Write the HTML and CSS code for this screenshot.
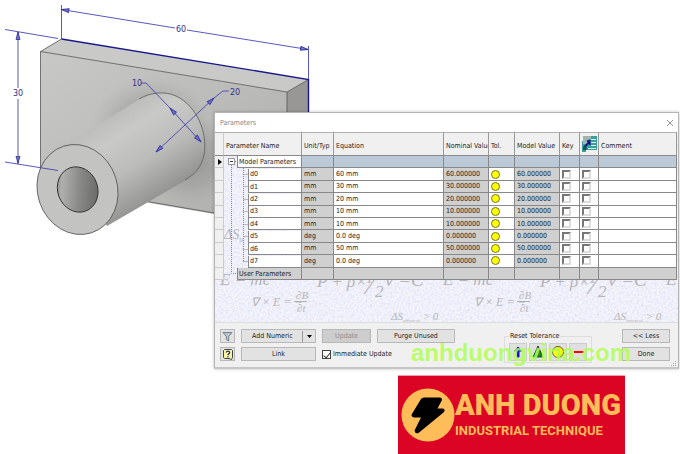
FILE: index.html
```html
<!DOCTYPE html>
<html lang="en">
<head>
<meta charset="utf-8">
<title>Parameters</title>
<link rel="stylesheet" href="styles.css">
</head>
<body>
<main class="canvas">
<svg class="model" width="330" height="250" viewBox="0 0 330 250" role="img" aria-label="Plate with hollow boss and dimensions">
  <defs>
    <linearGradient id="face" x1="0" y1="0" x2="1" y2="1"><stop offset="0" stop-color="#c8c8c6"/><stop offset=".5" stop-color="#bbbbb9"/><stop offset="1" stop-color="#acacaa"/></linearGradient>
    <linearGradient id="body" gradientUnits="userSpaceOnUse" x1="97" y1="122" x2="148" y2="204"><stop offset="0" stop-color="#bcbcba"/><stop offset=".25" stop-color="#c9c9c7"/><stop offset=".6" stop-color="#bbbbb9"/><stop offset="1" stop-color="#939391"/></linearGradient>
    <linearGradient id="bore" x1="0" y1=".1" x2="1" y2=".6"><stop offset="0" stop-color="#6c6c6a"/><stop offset=".2" stop-color="#b0b0ae"/><stop offset=".6" stop-color="#898987"/><stop offset="1" stop-color="#6c6c6a"/></linearGradient>
    <radialGradient id="shade"><stop offset="0" stop-color="#777" stop-opacity=".55"/><stop offset=".55" stop-color="#888" stop-opacity=".35"/><stop offset="1" stop-color="#999" stop-opacity="0"/></radialGradient>
    <clipPath id="plate"><path d="M40.500 51.500L287 92V230L40.500 188Z"/></clipPath>
    <marker id="tip" markerUnits="userSpaceOnUse" markerWidth="10" markerHeight="6" refX="8" refY="3" orient="auto-start-reverse"><path d="M.5 1L8 3L.5 5Z" fill="#7171bd" stroke="#2929a0" stroke-width=".8"/></marker>
  </defs>
  <path d="M40.500 51.500L287 92V230L40.500 188Z" fill="url(#face)"/>
  <g clip-path="url(#plate)"><ellipse cx="152" cy="128" rx="60" ry="52" fill="url(#shade)"/><ellipse cx="190" cy="160" rx="50" ry="45" fill="url(#shade)"/></g>
  <path d="M61.500 39L308.500 79.500L287 92L40.500 51.500Z" fill="#c9c9c7"/>
  <path d="M287 92L308.500 79.500V140H287Z" fill="#999795"/>
  <path d="M61.500 39L40.500 51.500V188M40.500 51.500L287 92L308.500 79.500M287 92V120M147 201.500L220 214" fill="none" stroke="#555" stroke-width=".8"/>
  <path d="M147 202.500L220 215V228L90 232Z" fill="#fff"/>
  <path d="M57 150L140 99C151 92 165 91 176 96C197 106 208 133 204 155C201 168 195 174 186 180L107 226Z" fill="url(#body)"/>
  <path d="M139 99C151 92 165 91 176 96C197 106 208 133 204 155C201 168 195 174 185 180" fill="none" stroke="#666" stroke-width=".9"/>
  <ellipse cx="77.500" cy="189.500" rx="40" ry="45.500" transform="rotate(-18 77.500 189.500)" fill="#c3c3c1" stroke="#555" stroke-width=".8"/>
  <ellipse cx="77.700" cy="189.500" rx="20" ry="23" transform="rotate(-20 77.700 189.500)" fill="url(#bore)" stroke="#333" stroke-width=".9"/>
  <g fill="none" stroke="#4545b4" stroke-width=".9">
    <path d="M61.500 5V39M308.500 46V80M5 29.500L58 38.500M5 162L58 170.500"/>
    <path d="M61.500 9.500L175 28" marker-start="url(#tip)"/><path d="M187 30L308 49.500" marker-end="url(#tip)"/>
    <path d="M18 32V88" marker-start="url(#tip)"/><path d="M18 99V163.500" marker-end="url(#tip)"/>
    <path d="M141 83H146L170 108"/><path d="M170 108L201 142" marker-start="url(#tip)" marker-end="url(#tip)"/>
    <path d="M229 91H223L214 98"/><path d="M214 98L156 152" marker-start="url(#tip)" marker-end="url(#tip)"/>
  </g>
  <path d="M61.500 39L308.500 79.500V115" fill="none" stroke="#17178f" stroke-width="1.400"/>
  <g class="dim"><text x="176" y="32">60</text><text x="13" y="96">30</text><text x="132" y="86">10</text><text x="230" y="95">20</text></g>
</svg>

<section class="dialog" aria-labelledby="dlg-title">
  <header class="titlebar">
    <h1 id="dlg-title">Parameters</h1>
    <button class="close" aria-label="Close"><svg width="8" height="8" viewBox="0 0 8 8"><path d="M1 1L7 7M7 1L1 7" stroke="#888" stroke-width=".9"/></svg></button>
  </header>
  <div class="workarea">
    <svg class="paper" width="100%" height="100%" aria-hidden="true">
      <filter id="grain" x="0" y="0" width="100%" height="100%"><feTurbulence type="fractalNoise" baseFrequency=".45" numOctaves="2" seed="4"/><feColorMatrix values="0 0 0 0 .72  0 0 0 0 .72  0 0 0 0 .95  0 1.800 0 0 -.7"/></filter>
      <rect width="100%" height="100%" fill="#f4f4fb"/>
      <rect width="100%" height="100%" filter="url(#grain)"/>
      <g class="formula">
        <text class="f14" x="9" y="107">ΔS<tspan class="f8" dy="3">u</tspan></text>
        <g id="formulas">
          <text class="f17" x="5" y="153">E = mc</text>
          <text class="f17" x="102" y="155">P + ρ×</text><text class="f14" x="151" y="151">1</text><text class="f26" x="153" y="162">⁄</text><text class="f17" x="160" y="165">2</text><text class="f19" x="170" y="154">v =C</text>
          <text class="f12" x="36" y="174">∇ × E = −</text><text class="f11" x="81" y="167">∂B</text><text class="f11" x="82" y="180">∂t</text><path d="M79 169.500H92"/>
          <text class="f11" x="176" y="188">ΔS<tspan class="f5" dy="2">universe</tspan><tspan dy="-2"> &gt; 0</tspan></text>
        </g>
        <use href="#formulas" x="223"/>
        <text class="f17" x="451" y="153">E</text>
      </g>
      <g class="tree"><path d="M16.500 33V141.500H22M20 29.500H22M28.500 36V129.500M28.500 42.500H33M28.500 54.500H33M28.500 67.500H33M28.500 79.500H33M28.500 92.500H33M28.500 104.500H33M28.500 117.500H33M28.500 129.500H33"/></g>
      <rect x="13.500" y="26.500" width="6" height="6" fill="#fff" stroke="#999"/><path d="M15 29.500H18" stroke="#333"/>
    </svg>
    <table class="params">
      <colgroup><col class="c-sel"><col class="c-name"><col class="c-unit"><col class="c-eq"><col class="c-val"><col class="c-tol"><col class="c-val"><col class="c-key"><col class="c-exp"><col></colgroup>
      <thead><tr><th></th><th>Parameter Name</th><th>Unit/Typ</th><th>Equation</th><th>Nominal Value</th><th>Tol.</th><th>Model Value</th><th>Key</th>
      <th class="exp"><svg width="15" height="16" viewBox="0 0 15 16" role="img" aria-label="Export"><path d="M1 0H15V14H4V16H0V5H1Z" fill="#3c9e9a"/><path d="M1 0H9V3H1Z" fill="#a5b3ae"/><path d="M9 3.500H14M9 6.500H14M9 9.500H14M6 12.500H14" stroke="#d9f2e8" stroke-width="1.200"/><path d="M1 3H6V8H1Z" fill="#9fb8b4"/><path d="M4.500 4.500L8.500 4V9.500L6.500 8L3.500 11.500L2 10L5.500 6.500Z" fill="#101090"/><path d="M1 10.500H4.500V14H1Z" fill="#14514f"/></svg></th><th>Comment</th></tr></thead>
      <tbody>
        <tr class="model-row"><td class="sel"><svg width="4" height="6" viewBox="0 0 4 6"><path d="M0 0L4 3L0 6Z"/></svg></td><td class="tree-cell"><span class="group">Model Parameters</span></td><td></td><td></td><td></td><td></td><td></td><td></td><td></td><td></td></tr>
        <tr><td class="sel"></td><td class="tree-cell"><span class="leaf">d0</span></td><td class="ro">mm</td><td>60 mm</td><td class="ro">60.000000</td><td><i class="dot"></i></td><td class="ro">60.000000</td><td><input type="checkbox" aria-label="d0 key"></td><td><input type="checkbox" aria-label="d0 export"></td><td></td></tr>
        <tr><td class="sel"></td><td class="tree-cell"><span class="leaf">d1</span></td><td class="ro">mm</td><td>30 mm</td><td class="ro">30.000000</td><td><i class="dot"></i></td><td class="ro">30.000000</td><td><input type="checkbox" aria-label="d1 key"></td><td><input type="checkbox" aria-label="d1 export"></td><td></td></tr>
        <tr><td class="sel"></td><td class="tree-cell"><span class="leaf">d2</span></td><td class="ro">mm</td><td>20 mm</td><td class="ro">20.000000</td><td><i class="dot"></i></td><td class="ro">20.000000</td><td><input type="checkbox" aria-label="d2 key"></td><td><input type="checkbox" aria-label="d2 export"></td><td></td></tr>
        <tr><td class="sel"></td><td class="tree-cell"><span class="leaf">d3</span></td><td class="ro">mm</td><td>10 mm</td><td class="ro">10.000000</td><td><i class="dot"></i></td><td class="ro">10.000000</td><td><input type="checkbox" aria-label="d3 key"></td><td><input type="checkbox" aria-label="d3 export"></td><td></td></tr>
        <tr><td class="sel"></td><td class="tree-cell"><span class="leaf">d4</span></td><td class="ro">mm</td><td>10 mm</td><td class="ro">10.000000</td><td><i class="dot"></i></td><td class="ro">10.000000</td><td><input type="checkbox" aria-label="d4 key"></td><td><input type="checkbox" aria-label="d4 export"></td><td></td></tr>
        <tr><td class="sel"></td><td class="tree-cell"><span class="leaf">d5</span></td><td class="ro">deg</td><td>0.0 deg</td><td class="ro">0.000000</td><td><i class="dot"></i></td><td class="ro">0.000000</td><td><input type="checkbox" aria-label="d5 key"></td><td><input type="checkbox" aria-label="d5 export"></td><td></td></tr>
        <tr><td class="sel"></td><td class="tree-cell"><span class="leaf">d6</span></td><td class="ro">mm</td><td>50 mm</td><td class="ro">50.000000</td><td><i class="dot"></i></td><td class="ro">50.000000</td><td><input type="checkbox" aria-label="d6 key"></td><td><input type="checkbox" aria-label="d6 export"></td><td></td></tr>
        <tr><td class="sel"></td><td class="tree-cell"><span class="leaf">d7</span></td><td class="ro">deg</td><td>0.0 deg</td><td class="ro">0.000000</td><td><i class="dot"></i></td><td class="ro">0.000000</td><td><input type="checkbox" aria-label="d7 key"></td><td><input type="checkbox" aria-label="d7 export"></td><td></td></tr>
        <tr class="user-row"><td class="sel"></td><td class="tree-cell"><span class="group">User Parameters</span></td><td></td><td></td><td></td><td></td><td></td><td></td><td></td><td></td></tr>
      </tbody>
    </table>
  </div>
  <footer class="actions">
    <div class="left">
      <button class="btn icon" aria-label="Filter"><svg width="11" height="11" viewBox="0 0 11 11"><path d="M1 1.500H10L6.700 5.500V10L4.300 8.500V5.500Z" fill="#b9c4d0" stroke="#6c7885" stroke-width=".9"/></svg></button>
      <button class="btn add"><span>Add Numeric</span><svg class="caret" width="5" height="3" viewBox="0 0 5 3"><path d="M0 0H5L2.500 3Z"/></svg></button>
      <button class="btn" disabled>Update</button>
      <button class="btn purge">Purge Unused</button>
      <button class="btn icon" aria-label="Help"><svg width="10" height="11" viewBox="0 0 10 11"><path d="M1.500 .5H8.500L9.500 1.500V8.500L8.500 10.500L6 9.500H1.500L.5 8.500V1.500Z" fill="#fbf9a0" stroke="#444"/><path d="M3.300 3.500C3.300 1.600 6.700 1.600 6.700 3.500C6.700 4.700 5 4.600 5 6.200M5 7.300V8.500" fill="none" stroke="#222e78" stroke-width="1.300"/></svg></button>
      <button class="btn">Link</button>
      <label class="check"><input type="checkbox" checked>Immediate Update</label>
    </div>
    <fieldset class="tolerance"><legend>Reset Tolerance</legend>
      <button class="tol" aria-label="Upper"><svg width="16" height="16" viewBox="0 0 16 16"><path d="M8 3L12 7H9V13H7V7H4Z" fill="#1010e0" stroke="#1010e0"/></svg></button>
      <button class="tol" aria-label="Median"><svg width="16" height="16" viewBox="0 0 16 16"><path d="M8 2L13 13H3Z" fill="#128a1c" stroke="#222" stroke-width=".8"/></svg></button>
      <button class="tol" aria-label="Nominal"><svg width="16" height="16" viewBox="0 0 16 16"><circle cx="8" cy="8" r="5.500" fill="#ff0" stroke="#333" stroke-width=".8"/></svg></button>
      <button class="tol" aria-label="Lower"><svg width="16" height="16" viewBox="0 0 16 16"><path d="M4 8H13" stroke="#f00" stroke-width="2"/></svg></button>
    </fieldset>
    <div class="right"><button class="btn">&lt;&lt; Less</button><button class="btn">Done</button></div>
    <svg class="grip" width="6" height="6" viewBox="0 0 6 6" aria-hidden="true"><path d="M4 0H5V1H4ZM2 2H3V3H2ZM4 2H5V3H4ZM0 4H1V5H0ZM2 4H3V5H2ZM4 4H5V5H4Z" fill="#aaa"/></svg>
    <p class="watermark">anhduongvina.com</p>
  </footer>
</section>

<aside class="brand">
  <svg width="54" height="54" viewBox="0 0 54 54" aria-hidden="true"><circle cx="27" cy="27" r="26.500" fill="#ffbd59"/><path d="M23 9.500H39Q42 10 40.500 13L36.500 20.500H42Q45 21.500 42.500 24.500L17.500 45Q14 46 13.500 42.500L20 29.500H13Q9 28.500 11.500 25L20 11Q21 9.500 23 9.500Z"/></svg>
  <div><p class="name">ANH DUONG</p><p class="tag">INDUSTRIAL TECHNIQUE</p></div>
</aside>
</main>
</body>
</html>
```
FILE: styles.css
```css
* { box-sizing: border-box; }
body { margin: 0; background: #fff; color: #222; font: 7px/10px "DejaVu Sans Condensed", "DejaVu Sans", sans-serif; overflow: hidden; }
h1, p { margin: 0; }
button, input { margin: 0; font: inherit; color: inherit; }
svg { display: block; flex: none; }

.canvas { position: relative; padding: 112px 1px 0 214px; }
.model { position: absolute; left: 0; top: 0; }
.dim { fill: #33338f; font: 8px "DejaVu Sans", sans-serif; }

.dialog { position: relative; background: #f0f0f0; border: 1px solid #b4b4b4; border-bottom: 2px solid #c6c6c6; box-shadow: 0 0 3px rgba(0, 0, 0, .25); }
.titlebar { display: flex; align-items: center; justify-content: space-between; height: 19px; padding: 0 4px 0 5px; background: #fff; }
.titlebar h1 { font-size: 7px; font-weight: 400; color: #888; }
.close { padding: 0; border: 0; background: none; }

.workarea { position: relative; padding: 0 1px 42px 0; }
.paper { position: absolute; inset: 0; }
.formula { fill: #b6b6b6; font-family: "Liberation Serif", serif; font-style: italic; }
.formula path { stroke: #b0b0b0; }
.f5 { font-size: 5px; }
.f8 { font-size: 8px; }
.f11 { font-size: 11px; }
.f12 { font-size: 12px; }
.f14 { font-size: 14px; }
.f17 { font-size: 17px; }
.f19 { font-size: 19px; }
.f26 { font-size: 26px; }
.tree { fill: none; stroke: #888; stroke-dasharray: 1 1; }

.params { position: relative; width: 100%; height: 148px; table-layout: fixed; border-spacing: 0; }
.c-sel { width: 9px; }
.c-name { width: 78px; }
.c-unit { width: 32px; }
.c-eq { width: 110px; }
.c-val { width: 45px; }
.c-tol { width: 26px; }
.c-key { width: 20px; }
.c-exp { width: 19px; }
.params th, .params td { padding: 0 2px; border: solid #888; border-width: 0 1px 1px 0; text-align: left; white-space: nowrap; overflow: hidden; font-weight: 400; background: #fff; }
.params th { height: 24px; padding-top: 3px; background: #f0f0f0; border-top: 1px solid #b0b0b0; border-right-color: #999; }
.params th:first-child { border-right-color: #ccc; }
.params th.exp { padding: 0 0 0 2px; }
.params td.sel { padding: 0 0 0 3px; background: #f0f0f0; border-color: #ccc; }
.params .tree-cell { padding: 0 0 0 13px; background: none; border-bottom: 0; vertical-align: bottom; }
.tree-cell span { display: flex; align-items: center; height: 12px; padding-left: 1px; border: solid #888; border-width: 0 0 1px 1px; background: #fff; }
.tree-cell .leaf { margin-left: 11px; }
.params .ro { background: #d0d0d0; }
.params .model-row td:nth-child(n+3) { background: #bccad8; }
.params .user-row td:nth-child(n+3), .user-row .group { background: #d0d0d0; }
.dot { display: block; width: 9px; height: 9px; border: 1px solid #777722; border-radius: 50%; background: #ff0; }
.params input { display: block; appearance: none; width: 9px; height: 9px; border: 2px solid; border-color: #777 #ddd #ddd #777; background: #fff; }

.actions { position: relative; display: flex; gap: 12px; padding: 6px 8px 4px 5px; border-top: 1px solid #ddd; }
.left { display: grid; grid-template-columns: 15px 75px 49px 78px; grid-auto-rows: 14px; gap: 4px 6px; }
.btn { padding: 0; border: 1px solid #b8b8b8; background: #e2e2e2; }
.btn:disabled { background: #cdcdcd; color: #8c8c8c; }
.btn.icon { display: grid; place-items: center; }
.add { display: flex; align-items: center; justify-content: space-between; padding: 0 3px 0 10px; }
.caret { box-sizing: content-box; padding: 4px 0 4px 4px; border-left: 1px solid #999; }
.check { grid-column: span 2; display: flex; align-items: center; gap: 2px; }
.check input { display: block; width: 9px; height: 9px; appearance: none; border: 1px solid #444; background: #fff; }
.check input:checked::before { content: ""; display: block; width: 3px; height: 6px; margin-left: 2px; border: solid #333; border-width: 0 1px 1px 0; transform: rotate(40deg); }
.tolerance { display: flex; gap: 2px; width: 86px; height: 34px; margin: 0 0 0 auto; padding: 0 4px; border: 1px solid #ddd; }
.tolerance legend { padding: 0 1px; line-height: 14px; }
.tol { display: grid; place-items: center; width: 18px; height: 18px; padding: 0; border: 1px solid #ccc; background: #e0e0e0; }
.right { display: grid; grid-template-columns: 48px; grid-auto-rows: 14px; gap: 4px; margin-left: 18px; }
.grip { position: absolute; right: 1px; bottom: 0; }
.watermark { position: absolute; left: 196px; bottom: 2px; color: rgba(176, 255, 84, .85); font: bold 24px/24px "Liberation Sans", sans-serif; pointer-events: none; }

.brand { display: flex; align-items: flex-start; height: 80px; width: 227px; margin: 6px 0 0 184px; padding: 12px 3px; background: #dc0424; color: #ffbd59; border-top: 1px solid #f0a0aa; }
.name { font: 900 29px/34px Roboto, sans-serif; white-space: nowrap; }
.tag { font: bold 13px/18px Roboto, sans-serif; white-space: nowrap; }
```
